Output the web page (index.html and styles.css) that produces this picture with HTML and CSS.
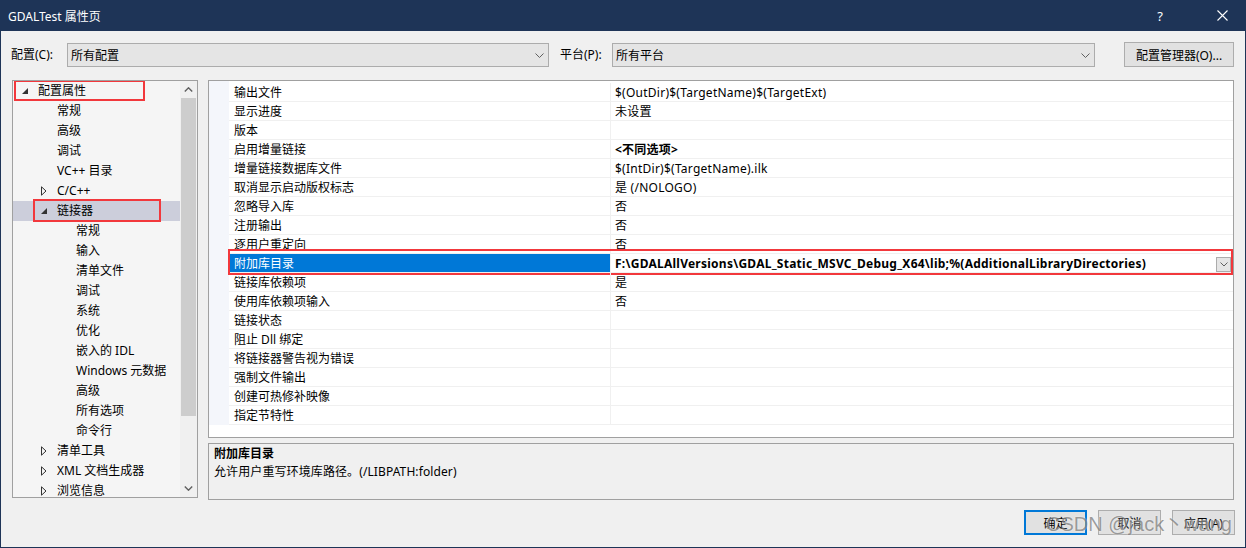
FILE: index.html
```html
<!DOCTYPE html>
<html lang="zh-CN">
<head>
<meta charset="utf-8">
<title>GDALTest 属性页</title>
<link rel="stylesheet" href="styles.css">
</head>
<body>
<div class="window">
  <div class="titlebar">
    <span class="title">GDALTest 属性页</span>
    <span class="tbbtn tb-help">?</span>
    <span class="tbbtn tb-close"><svg width="11" height="11" viewBox="0 0 11 11"><path d="M0.5 0.5L10.5 10.5M10.5 0.5L0.5 10.5" stroke="#fff" stroke-width="1.1" fill="none"/></svg></span>
  </div>
  <div class="content">
    <div class="config-row">
      <span class="lbl lbl-config">配置(C):</span>
      <div class="combo combo-config"><span class="combo-text">所有配置</span><svg class="chev" width="9" height="5" viewBox="0 0 9 5"><path d="M0.5 0.5L4.5 4.5L8.5 0.5" stroke="#606060" fill="none"/></svg></div>
      <span class="lbl lbl-platform">平台(P):</span>
      <div class="combo combo-platform"><span class="combo-text">所有平台</span><svg class="chev" width="9" height="5" viewBox="0 0 9 5"><path d="M0.5 0.5L4.5 4.5L8.5 0.5" stroke="#606060" fill="none"/></svg></div>
      <button class="btn btn-manager">配置管理器(O)...</button>
    </div>
    <div class="main">
      <div class="tree">
        <ul class="tree-list">
          <li class="ti lv0"><span class="tw"><svg width="6" height="6" viewBox="0 0 6 6"><path d="M6 0V6H0Z" fill="#333"/></svg></span>配置属性<span class="mark mark-root"></span></li>
          <li class="ti lv1"><span class="tw"></span>常规</li>
          <li class="ti lv1"><span class="tw"></span>高级</li>
          <li class="ti lv1"><span class="tw"></span>调试</li>
          <li class="ti lv1"><span class="tw"></span>VC++ 目录</li>
          <li class="ti lv1"><span class="tw"><svg width="6" height="10" viewBox="0 0 6 10"><path d="M0.5 0.8L5 5L0.5 9.2Z" stroke="#333" fill="none"/></svg></span>C/C++</li>
          <li class="ti lv1 hl"><span class="tw"><svg width="6" height="6" viewBox="0 0 6 6"><path d="M6 0V6H0Z" fill="#333"/></svg></span>链接器<span class="mark mark-linker"></span></li>
          <li class="ti lv2"><span class="tw"></span>常规</li>
          <li class="ti lv2"><span class="tw"></span>输入</li>
          <li class="ti lv2"><span class="tw"></span>清单文件</li>
          <li class="ti lv2"><span class="tw"></span>调试</li>
          <li class="ti lv2"><span class="tw"></span>系统</li>
          <li class="ti lv2"><span class="tw"></span>优化</li>
          <li class="ti lv2"><span class="tw"></span>嵌入的 IDL</li>
          <li class="ti lv2"><span class="tw"></span>Windows 元数据</li>
          <li class="ti lv2"><span class="tw"></span>高级</li>
          <li class="ti lv2"><span class="tw"></span>所有选项</li>
          <li class="ti lv2"><span class="tw"></span>命令行</li>
          <li class="ti lv1"><span class="tw"><svg width="6" height="10" viewBox="0 0 6 10"><path d="M0.5 0.8L5 5L0.5 9.2Z" stroke="#333" fill="none"/></svg></span>清单工具</li>
          <li class="ti lv1"><span class="tw"><svg width="6" height="10" viewBox="0 0 6 10"><path d="M0.5 0.8L5 5L0.5 9.2Z" stroke="#333" fill="none"/></svg></span>XML 文档生成器</li>
          <li class="ti lv1"><span class="tw"><svg width="6" height="10" viewBox="0 0 6 10"><path d="M0.5 0.8L5 5L0.5 9.2Z" stroke="#333" fill="none"/></svg></span>浏览信息</li>
        </ul>
        <div class="vscroll">
          <div class="vs-btn"><svg width="9" height="5" viewBox="0 0 9 5"><path d="M0.8 4.5L4.5 0.8L8.2 4.5" stroke="#606060" stroke-width="1.4" fill="none"/></svg></div>
          <div class="vs-track"><div class="vs-thumb"></div></div>
          <div class="vs-btn"><svg width="9" height="5" viewBox="0 0 9 5"><path d="M0.8 0.5L4.5 4.2L8.2 0.5" stroke="#606060" stroke-width="1.4" fill="none"/></svg></div>
        </div>
      </div>
      <div class="right">
        <div class="grid">
          <div class="rows">
            <div class="prow"><span class="gut"></span><span class="pname">输出文件</span><span class="pval">$(OutDir)$(TargetName)$(TargetExt)</span></div>
            <div class="prow"><span class="gut"></span><span class="pname">显示进度</span><span class="pval">未设置</span></div>
            <div class="prow"><span class="gut"></span><span class="pname">版本</span><span class="pval"></span></div>
            <div class="prow"><span class="gut"></span><span class="pname">启用增量链接</span><span class="pval bold">&lt;不同选项&gt;</span></div>
            <div class="prow"><span class="gut"></span><span class="pname">增量链接数据库文件</span><span class="pval">$(IntDir)$(TargetName).ilk</span></div>
            <div class="prow"><span class="gut"></span><span class="pname">取消显示启动版权标志</span><span class="pval">是 (/NOLOGO)</span></div>
            <div class="prow"><span class="gut"></span><span class="pname">忽略导入库</span><span class="pval">否</span></div>
            <div class="prow"><span class="gut"></span><span class="pname">注册输出</span><span class="pval">否</span></div>
            <div class="prow"><span class="gut"></span><span class="pname">逐用户重定向</span><span class="pval">否</span></div>
            <div class="prow"><span class="gut"></span><span class="pname sel">附加库目录</span><span class="pval bold"><span class="val-text">F:\GDALAllVersions\GDAL_Static_MSVC_Debug_X64\lib;%(AdditionalLibraryDirectories)</span><span class="dd"><svg width="8" height="5" viewBox="0 0 8 5"><path d="M0.5 0.5L4 4L7.5 0.5" stroke="#606060" fill="none"/></svg></span></span><span class="mark mark-row"></span></div>
            <div class="prow"><span class="gut"></span><span class="pname">链接库依赖项</span><span class="pval">是</span></div>
            <div class="prow"><span class="gut"></span><span class="pname">使用库依赖项输入</span><span class="pval">否</span></div>
            <div class="prow"><span class="gut"></span><span class="pname">链接状态</span><span class="pval"></span></div>
            <div class="prow"><span class="gut"></span><span class="pname">阻止 Dll 绑定</span><span class="pval"></span></div>
            <div class="prow"><span class="gut"></span><span class="pname">将链接器警告视为错误</span><span class="pval"></span></div>
            <div class="prow"><span class="gut"></span><span class="pname">强制文件输出</span><span class="pval"></span></div>
            <div class="prow"><span class="gut"></span><span class="pname">创建可热修补映像</span><span class="pval"></span></div>
            <div class="prow"><span class="gut"></span><span class="pname">指定节特性</span><span class="pval"></span></div>
          </div>
        </div>
        <div class="desc">
          <div class="desc-title">附加库目录</div>
          <div class="desc-text">允许用户重写环境库路径。(/LIBPATH:folder)</div>
        </div>
      </div>
    </div>
    <div class="footer">
      <button class="btn btn-dlg btn-primary">确定</button>
      <button class="btn btn-dlg">取消</button>
      <button class="btn btn-dlg">应用(A)</button>
      <span class="watermark">CSDN @jack丶wang</span>
    </div>
  </div>
</div>
</body>
</html>
```

FILE: styles.css
```css
* { box-sizing: border-box; }
html, body { margin: 0; padding: 0; }
body {
  width: 1246px;
  height: 548px;
  overflow: hidden;
  font-family: "Noto Sans", "Noto Sans CJK SC", sans-serif;
  font-size: 12px;
  color: #000;
  background: #f0f0f0;
}
.window {
  width: 1246px;
  height: 548px;
  border: 1px solid #1e3457;
  border-top: 0;
  display: flex;
  flex-direction: column;
  background: #f0f0f0;
}
.titlebar {
  height: 31px;
  flex: none;
  background: #1e3457;
  color: #fff;
  display: flex;
  align-items: center;
  padding-left: 7px;
}
.title { font-size: 12px; }
.tbbtn {
  width: 46px;
  height: 31px;
  display: flex;
  align-items: center;
  justify-content: center;
}
.tb-help { margin-left: auto; margin-right: 16px; font-size: 13px; }
.content {
  flex: 1;
  padding: 0 10px 0 9px;
  display: flex;
  flex-direction: column;
}
.config-row {
  display: flex;
  align-items: flex-start;
  margin-top: 11px;
  height: 25px;
}
.lbl { line-height: 25px; white-space: nowrap; }
.lbl-config { width: 57px; padding-left: 1px; }
.lbl-platform { width: 52px; margin-left: 11px; }
.combo {
  height: 24px;
  margin-top: 1px;
  border: 1px solid #acacac;
  background: #e5e5e5;
  display: flex;
  align-items: center;
  padding: 0 4px 0 3px;
}
.combo-text { flex: 1; }
.combo-config { width: 482px; }
.combo-platform { width: 483px; }
.btn {
  font-family: inherit;
  font-size: 12px;
  color: #000;
  background: #e1e1e1;
  border: 1px solid #adadad;
  padding: 0;
  margin: 0;
}
.btn-manager { width: 110px; height: 25px; margin-left: 29px; }
.main {
  display: flex;
  margin-top: 13px;
  padding-left: 2px;
  gap: 10px;
  height: 420px;
}
.tree {
  width: 186px;
  height: 418px;
  border: 1px solid #a0a0a0;
  background: #f5f5f5;
  display: flex;
}
.tree-list {
  flex: 1;
  list-style: none;
  margin: 0;
  padding: 0;
  overflow: hidden;
}
.ti {
  height: 20px;
  line-height: 20px;
  display: flex;
  align-items: center;
  position: relative;
  white-space: nowrap;
}
.lv0 { padding-left: 6px; }
.lv1 { padding-left: 25px; }
.lv2 { padding-left: 44px; }
.tw {
  width: 19px;
  flex: none;
  display: flex;
  align-items: center;
  padding-left: 3px;
}
.hl { background: #cccedb; }
.mark {
  position: absolute;
  border: 2px solid #f2383c;
  pointer-events: none;
}
.mark-root { left: 1px; top: -1px; width: 131px; height: 21px; }
.mark-linker { left: 20px; top: -2px; width: 128px; height: 23px; }
.vscroll {
  width: 17px;
  flex: none;
  display: flex;
  flex-direction: column;
  background: #f0f0f0;
}
.vs-btn {
  height: 17px;
  display: flex;
  align-items: center;
  justify-content: center;
}
.vs-track { flex: 1; padding: 0 1px; }
.vs-thumb { height: 318px; background: #cdcdcd; }
.right {
  width: 1026px;
  display: flex;
  flex-direction: column;
  gap: 5px;
}
.grid {
  height: 358px;
  border: 1px solid #a0a0a0;
  background: #fff;
}
.rows {
  padding-top: 2px;
  background: linear-gradient(to right, #f4f6fb 20px, transparent 20px);
}
.prow {
  display: flex;
  height: 19px;
  position: relative;
}
.gut { width: 20px; flex: none; }
.pname {
  width: 382px;
  flex: none;
  border-right: 1px solid #f0f0f0;
  border-bottom: 1px solid #f0f0f0;
  padding-left: 5px;
  line-height: 20px;
  white-space: nowrap;
}
.pname.sel { background: #0078d7; color: #fff; }
.pval {
  flex: 1;
  border-bottom: 1px solid #f0f0f0;
  padding-left: 4px;
  padding-top: 1px;
  line-height: 18px;
  letter-spacing: 0.25px;
  white-space: nowrap;
  display: flex;
  align-items: center;
}
.bold { font-weight: bold; }
.val-text { flex: 1; }
.dd {
  width: 15px;
  height: 15px;
  margin-right: 2px;
  margin-top: 1px;
  border: 1px solid #acacac;
  background: #e5e5e5;
  display: flex;
  align-items: center;
  justify-content: center;
}
.mark-row { left: 19px; top: -5px; width: 1005px; height: 26px; }
.desc {
  height: 57px;
  border: 1px solid #a0a0a0;
  background: #f0f0f0;
  padding-left: 5px;
  padding-top: 1px;
  line-height: 18px;
}
.desc-title { font-weight: bold; }
.desc-text { letter-spacing: 0.1px; }
.footer {
  display: flex;
  justify-content: flex-end;
  gap: 11px;
  margin-top: 10px;
  position: relative;
}
.btn-dlg { width: 63px; height: 25px; }
.btn-primary { border: 2px solid #0078d7; }
.watermark {
  position: absolute;
  right: 3px;
  top: 3px;
  font-family: "Liberation Sans", sans-serif;
  font-size: 20px;
  line-height: 23px;
  color: rgba(95, 95, 95, 0.6);
  text-shadow: 0 0 2px rgba(255, 255, 255, 0.7);
  white-space: nowrap;
  pointer-events: none;
}
```
